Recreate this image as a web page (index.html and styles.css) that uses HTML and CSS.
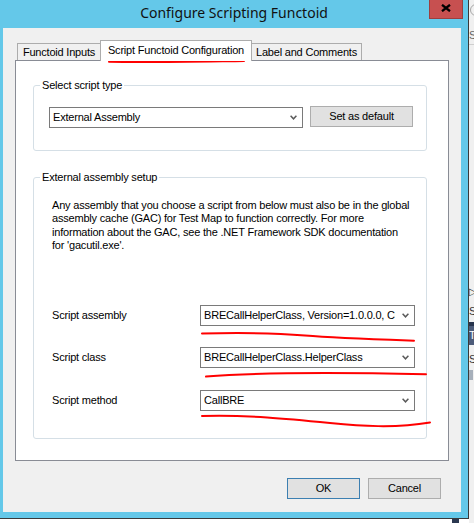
FILE: index.html
```html
<!DOCTYPE html>
<html lang="en">
<head>
<meta charset="utf-8">
<title>Configure Scripting Functoid</title>
<link rel="stylesheet" href="styles.css">
</head>
<body>
<div class="screen">
  <div class="window">
    <div class="titlebar">
      <div class="title">Configure Scripting Functoid</div>
      <div class="close">
        <svg class="close-glyph" width="10" height="8" viewBox="0 0 10 8"><path d="M1 0.8 L9 7.2 M9 0.8 L1 7.2" stroke="#000" stroke-width="2.3" fill="none"/></svg>
      </div>
    </div>
    <div class="client">
      <div class="tabs">
        <div class="tab tab-inputs">Functoid Inputs</div>
        <div class="tab tab-active tab-config">Script Functoid Configuration</div>
        <div class="tab tab-label">Label and Comments</div>
      </div>
      <div class="panel">
        <fieldset class="group group-type">
          <legend class="group-title">Select script type</legend>
          <div class="type-row">
            <div class="combo combo-type">
              <span class="combo-text">External Assembly</span>
              <svg class="chev" width="7" height="5" viewBox="0 0 7 5"><path d="M0.6 0.8 L3.5 3.8 L6.4 0.8" stroke="#5b5b5b" stroke-width="1.5" fill="none"/></svg>
            </div>
            <button class="btn btn-default">Set as default</button>
          </div>
        </fieldset>
        <fieldset class="group group-setup">
          <legend class="group-title">External assembly setup</legend>
          <p class="note">Any assembly that you choose a script from below must also be in the global<br>assembly cache (GAC) for Test Map to function correctly. For more<br>information about the GAC, see the .NET Framework SDK documentation<br>for 'gacutil.exe'.</p>
          <div class="fields">
            <span class="field-label">Script assembly</span>
            <div class="combo">
              <span class="combo-text">BRECallHelperClass, Version=1.0.0.0, Culture=neutral</span>
              <svg class="chev" width="7" height="5" viewBox="0 0 7 5"><path d="M0.6 0.8 L3.5 3.8 L6.4 0.8" stroke="#5b5b5b" stroke-width="1.5" fill="none"/></svg>
            </div>
            <span class="field-label">Script class</span>
            <div class="combo">
              <span class="combo-text">BRECallHelperClass.HelperClass</span>
              <svg class="chev" width="7" height="5" viewBox="0 0 7 5"><path d="M0.6 0.8 L3.5 3.8 L6.4 0.8" stroke="#5b5b5b" stroke-width="1.5" fill="none"/></svg>
            </div>
            <span class="field-label">Script method</span>
            <div class="combo">
              <span class="combo-text">CallBRE</span>
              <svg class="chev" width="7" height="5" viewBox="0 0 7 5"><path d="M0.6 0.8 L3.5 3.8 L6.4 0.8" stroke="#5b5b5b" stroke-width="1.5" fill="none"/></svg>
            </div>
          </div>
        </fieldset>
      </div>
      <div class="actions">
        <button class="btn btn-ok">OK</button>
        <button class="btn btn-cancel">Cancel</button>
      </div>
    </div>
  </div>

  <div class="desk-side">
    <span class="ds-circle"></span>
    <span class="ds-text ds-se">Select</span>
    <span class="ds-line"></span>
    <span class="ds-text ds-arrow">&#9655;</span>
    <span class="ds-text ds-sc1">Script</span>
    <span class="ds-navy"></span>
    <span class="ds-slate">The</span>
    <span class="ds-text ds-sc2">Script</span>
    <span class="ds-icon"></span>
  </div>
  <div class="desk-bottom"><span class="desk-square"></span></div>

  <svg class="marks" width="474" height="523" viewBox="0 0 474 523">
    <path d="M109 61.8 C150 62.6 200 61.6 244 61" />
    <path d="M202 333.5 C240 332.5 275 333 305 335.5 C335 338 380 339.5 414 340.7" />
    <path d="M206 376.6 C250 373 320 371.8 426 374.3" />
    <path d="M202 416 C245 414.5 290 419 330 423 C360 426 395 428.5 430 422.5" />
  </svg>
</div>
</body>
</html>
```

FILE: styles.css
```css
html, body {
  margin: 0;
  padding: 0;
  background: #ffffff;
}

body {
  font-family: "Liberation Sans", Arial, sans-serif;
  color: #000;
}

.screen {
  position: relative;
  width: 474px;
  height: 523px;
  overflow: hidden;
  display: grid;
  grid-template-columns: 469px 5px;
  grid-template-rows: 519px 4px;
}

/* ---------- window frame ---------- */
.window {
  grid-column: 1;
  grid-row: 1;
  background: #64c8e9;
  border-right: 1px solid #3a3a3a;
  border-bottom: 1px solid #3a3a3a;
  display: flex;
  flex-direction: column;
}

.titlebar {
  height: 28px;
  flex: none;
  display: grid;
  grid-template-columns: 1fr auto 1fr;
}

.title {
  grid-column: 2;
  font-family: "Noto Sans", "Open Sans", sans-serif;
  font-size: 14px;
  line-height: 26px;
  color: #111;
  white-space: nowrap;
}

.close {
  grid-column: 3;
  justify-self: end;
  margin-right: 5px;
  width: 34px;
  height: 19px;
  box-sizing: border-box;
  background: #c75050;
  border: 1px solid #9c3f3f;
  border-top: none;
  display: flex;
  justify-content: center;
  align-items: flex-start;
  padding-top: 4px;
}

.close-glyph {
  display: block;
}

.client {
  margin: 0 7px 6px 3px;
  height: 484px;
  box-sizing: border-box;
  background: #f0f0f0;
  padding: 12px 12px 0 12px;
}

/* ---------- tabs ---------- */
.tabs {
  position: relative;
  z-index: 1;
  display: flex;
  align-items: flex-start;
  height: 21px;
  margin-bottom: -1px;
  padding-left: 2px;
}

.tab {
  box-sizing: border-box;
  height: 17px;
  margin-top: 3px;
  border: 1px solid #acacac;
  border-bottom: none;
  background: #f0f0f0;
  font-size: 11px;
  letter-spacing: -0.2px;
  line-height: 16px;
  text-align: center;
  white-space: nowrap;
}

.tab-inputs {
  width: 84px;
}

.tab-active {
  position: relative;
  z-index: 1;
  width: 152px;
  height: 21px;
  margin-top: 0;
  margin-left: -1px;
  background: #ffffff;
  line-height: 18px;
}

.tab-label {
  width: 111px;
  margin-left: -1px;
}

/* ---------- panel ---------- */
.panel {
  box-sizing: border-box;
  width: 434px;
  height: 401px;
  background: #ffffff;
  border: 1px solid #898c95;
  padding: 18px 0 0 17px;
}

.group {
  box-sizing: border-box;
  width: 394px;
  margin: 0;
  padding: 0;
  min-inline-size: 0;
  border: 1px solid #d5dfe6;
  border-radius: 3px;
}

.group-title {
  margin-left: 6px;
  padding: 0 2px;
  font-size: 11px;
  letter-spacing: -0.2px;
  line-height: 13px;
}

.group-setup {
  margin-top: 20px;
}

.type-row {
  display: flex;
  align-items: flex-start;
  padding: 15px 0 22px 15px;
}

/* ---------- combos & buttons ---------- */
.combo {
  box-sizing: border-box;
  height: 21px;
  display: flex;
  align-items: center;
  background: #ffffff;
  border: 1px solid #7a7a7a;
  padding: 0 5px 0 3px;
}

.combo-text {
  flex: 1;
  min-width: 0;
  overflow: hidden;
  white-space: nowrap;
  font-size: 11px;
  letter-spacing: -0.2px;
  line-height: 13px;
  margin-right: 7px;
}

.chev {
  flex: none;
  display: block;
}

.combo-type {
  width: 254px;
}

.btn {
  box-sizing: border-box;
  height: 21px;
  padding: 0;
  margin: 0;
  background: #e1e1e1;
  border: 1px solid #adadad;
  border-radius: 0;
  color: #000;
  font-family: "Liberation Sans", Arial, sans-serif;
  font-size: 11px;
  letter-spacing: -0.2px;
  line-height: 13px;
}

.btn-default {
  width: 103px;
  margin-left: 7px;
  margin-top: -1px;
}

.btn-ok,
.btn-cancel {
  width: 73px;
}

.btn-ok {
  border-color: #3c7fb1;
}

/* ---------- setup group ---------- */
.note {
  margin: 15px 0 0 18px;
  font-size: 11px;
  letter-spacing: -0.2px;
  line-height: 13.33px;
  white-space: nowrap;
}

.fields {
  display: grid;
  grid-template-columns: 148px 215px;
  grid-auto-rows: 21px;
  row-gap: 21.5px;
  align-items: center;
  margin: 52.67px 0 27px 18px;
}

.field-label {
  font-size: 11px;
  letter-spacing: -0.2px;
  line-height: 13px;
}

.actions {
  display: flex;
  justify-content: flex-end;
  gap: 8px;
  margin-top: 17px;
  padding-right: 8px;
}

/* ---------- desktop behind the dialog ---------- */
.desk-side {
  grid-column: 2;
  grid-row: 1 / span 2;
  background: #f0f0f0;
  display: flex;
  flex-direction: column;
  overflow: hidden;
}

.ds-circle {
  flex: none;
  width: 10px;
  height: 10px;
  margin-top: 4px;
  margin-left: 1px;
  border: 1px solid #a8a8a8;
  border-radius: 50%;
}

.ds-text {
  flex: none;
  font-size: 11px;
  line-height: 13px;
  color: #333;
  white-space: nowrap;
}

.ds-se {
  margin-top: 13px;
  color: #666;
}

.ds-line {
  flex: none;
  height: 1px;
  margin-top: 2px;
  background: #cfcfcf;
}

.ds-arrow {
  margin-top: 240px;
  font-size: 10px;
}

.ds-sc1 {
  margin-top: 7px;
}

.ds-navy {
  flex: none;
  height: 4px;
  margin-top: 4px;
  background: #27344d;
}

.ds-slate {
  flex: none;
  height: 19px;
  background: #4c5b79;
  color: #ffffff;
  font-size: 11px;
  line-height: 19px;
  white-space: nowrap;
}

.ds-sc2 {
  margin-top: 8px;
}

.ds-icon {
  flex: none;
  width: 4px;
  height: 10px;
  margin-top: 4px;
  background: #a7b0bb;
}

.desk-bottom {
  grid-column: 1;
  grid-row: 2;
  background: #ffffff;
}

.desk-square {
  display: block;
  width: 7px;
  height: 4px;
  margin-left: 452px;
  background: #2b3850;
}

/* ---------- red annotations drawn over the screenshot ---------- */
.marks {
  position: absolute;
  left: 0;
  top: 0;
  pointer-events: none;
  fill: none;
  stroke: #ff0000;
  stroke-width: 2;
  stroke-linecap: round;
}
```
